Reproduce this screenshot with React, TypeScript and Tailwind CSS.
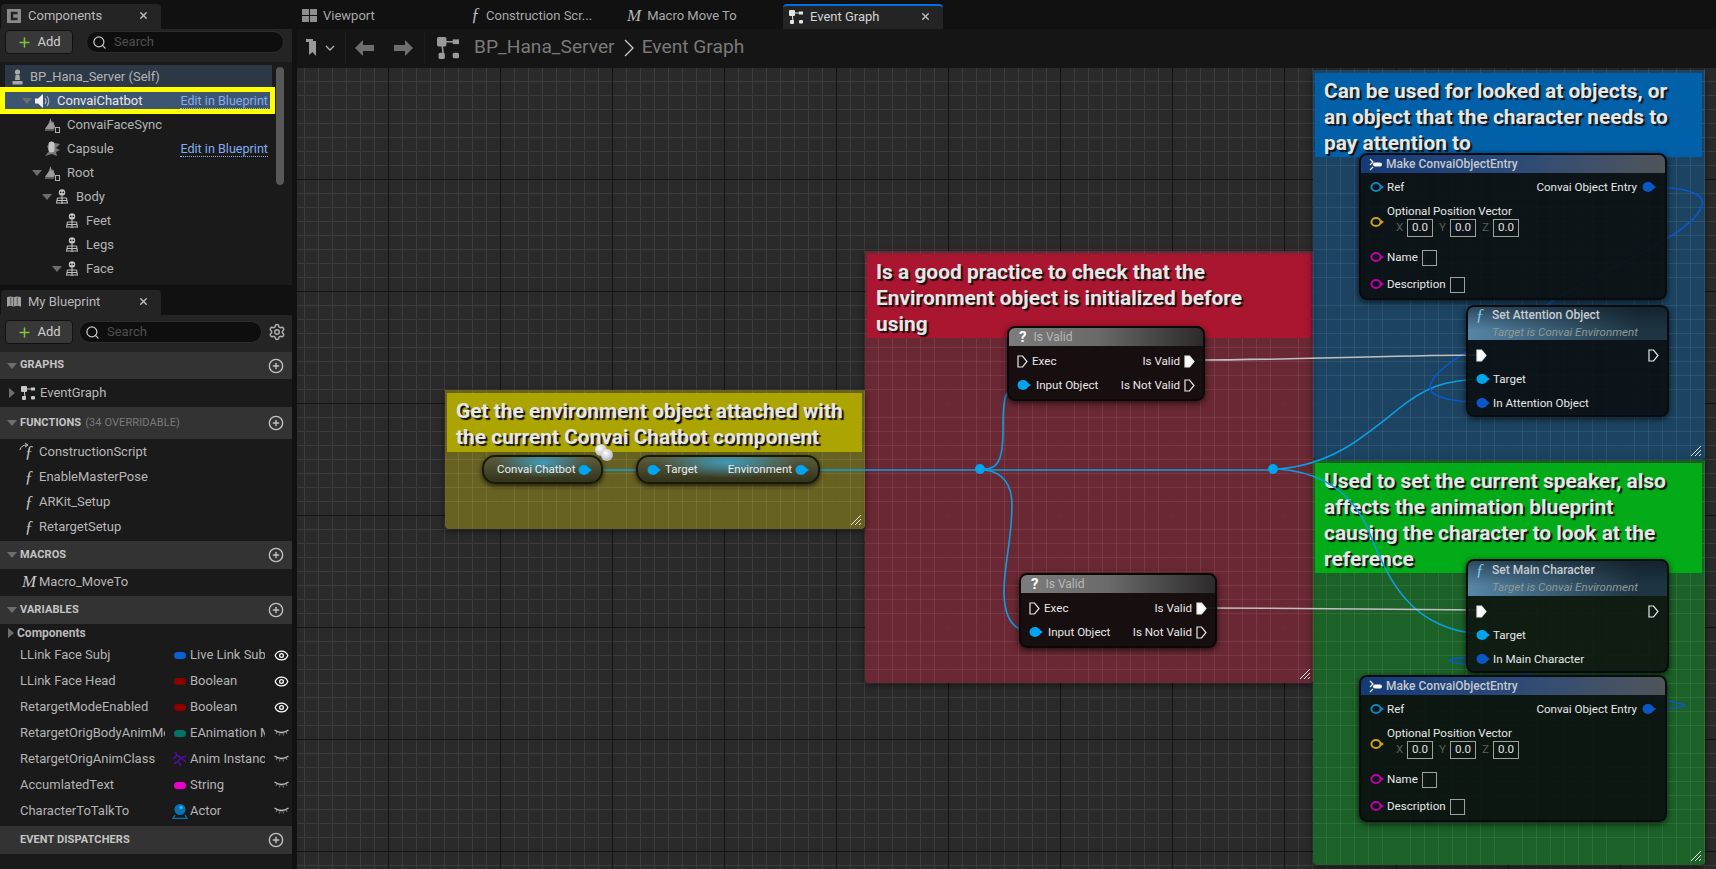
import React from 'react';
import { CirclePlus, Eye, Plus, Search, Settings, X } from 'lucide-react';

const Arrow = ({ open = true }: { open?: boolean }) => (
  <svg width="10" height="10" viewBox="0 0 10 10" className="shrink-0">
    {open ? <path d="M0 2 H10 L5 8 Z" fill="#6e6e6e" /> : <path d="M2 0 V10 L8 5 Z" fill="#6e6e6e" />}
  </svg>
);

const GraphIcon = ({ size = 14, color = '#c8c8c8' }: { size?: number; color?: string }) => (
  <svg width={size} height={size} viewBox="0 0 14 14" className="shrink-0">
    <path d="M3 3 L11 3 M3 3 L4 11" stroke={color} strokeWidth="1" />
    <rect x="0" y="0" width="6" height="6" rx="1" fill={color} />
    <rect x="10" y="1.5" width="4" height="3" fill={color} />
    <rect x="1" y="10" width="4" height="4" rx="1" fill={color} />
    <rect x="10" y="10" width="4" height="3.5" rx="1" fill={color} />
  </svg>
);

const Skeleton = () => (
  <svg width="14" height="16" viewBox="0 0 14 16" className="shrink-0">
    <circle cx="7" cy="3.5" r="3.2" fill="#c4c4c4" />
    <circle cx="5.7" cy="3.4" r="0.8" fill="#1a1a1a" />
    <circle cx="8.3" cy="3.4" r="0.8" fill="#1a1a1a" />
    <path d="M7 7 V15 M2.5 9 H11.5 M2 11.5 H12 M1.5 14 H12.5 M2.5 9 L1.5 14.5 M11.5 9 L12.5 14.5" stroke="#c4c4c4" strokeWidth="1.1" fill="none" />
  </svg>
);

const Mesh = () => (
  <svg width="15" height="16" viewBox="0 0 15 16" className="shrink-0">
    <path d="M0 12 L4 6 L5.5 1 L7 6 L8 4 L10 10 L9 12 Z" fill="#9a9a9a" />
    <path d="M0 13 H9" stroke="#9a9a9a" />
    <rect x="10.5" y="10.5" width="4" height="5" fill="none" stroke="#b0b0b0" />
  </svg>
);

const CapsuleIcon = () => (
  <svg width="15" height="16" viewBox="0 0 15 16" className="shrink-0">
    <path d="M0 15 L4 10 L2 5 L10 2 L15 3 L11 7 L15 9 L11 11 L12 15 L7 13 Z" fill="#777" />
    <rect x="3.5" y="0.5" width="6" height="11" rx="3" fill="#c4c4c4" />
  </svg>
);

const Pawn = () => (
  <svg width="13" height="16" viewBox="0 0 13 16" className="shrink-0">
    <circle cx="6.5" cy="3" r="2.6" fill="#a8a8a8" />
    <path d="M4.5 6 H8.5 L9 11 H4 Z M1.5 12 H11.5 V15.5 H1.5 Z" fill="#a8a8a8" />
  </svg>
);

const Speaker = () => (
  <svg width="16" height="16" viewBox="0 0 16 16" className="shrink-0">
    <path d="M0 5.5 H3 L8 1 V15 L3 10.5 H0 Z" fill="#f0f0f0" />
    <path d="M10 5 Q12 8 10 11 M12 3 Q15.5 8 12 13" stroke="#a8b4c0" strokeWidth="1.2" fill="none" />
  </svg>
);

const ClosedEye = () => (
  <svg width="15" height="10" viewBox="0 0 15 10" className="shrink-0">
    <path d="M0.5 2 Q7.5 7 14.5 2" stroke="#bdbdbd" strokeWidth="1.3" fill="none" />
    <path d="M3 4 L2 6 M6 5.2 L5.6 7.5 M9 5.2 L9.4 7.5 M12 4 L13 6" stroke="#8a8a8a" strokeWidth="1" />
  </svg>
);

const FnGlyph = ({ glyph = 'ƒ', cls = 'text-[#c8c8c8]' }: { glyph?: string; cls?: string }) => (
  <span className={`w-[16px] shrink-0 text-center font-['Liberation_Serif',serif] italic text-[17px] leading-none ${cls}`}>{glyph}</span>
);

const PanelTab = ({ icon, label, w }: { icon: React.ReactNode; label: string; w: string }) => (
  <div className={`ml-[1px] flex h-full items-center rounded-t-[4px] bg-[#242424] pb-[2px] pl-[6px] pr-[12px] ${w}`}>
    <span className="flex w-[14px] shrink-0 items-center">{icon}</span>
    <span className="ml-[7px] flex-1 text-[13px] text-[#b8b8b8]">{label}</span>
    <X size={11} strokeWidth={3} className="text-[#c0c0c0]" />
  </div>
);

const AddButton = () => (
  <div className="flex h-[24px] w-[68px] shrink-0 items-center justify-center gap-[5px] rounded-[4px] border border-[#111] bg-[#383838] text-[13px] text-[#d0d0d0]">
    <Plus size={15} strokeWidth={2.5} className="text-[#84bf3f]" />
    Add
  </div>
);

const SearchBox = ({ w }: { w: string }) => (
  <div className={`flex h-[22px] items-center rounded-full border border-[#2c2c2c] bg-[#0e0e0e] pl-[5px] ${w}`}>
    <Search size={15} className="text-[#c8c8c8]" />
    <span className="ml-[7px] pb-[1px] text-[13px] text-[#4e4e4e]">Search</span>
  </div>
);

const treeRows = [
  { pl: 'pl-[32px]', arrow: false, icon: <Mesh />, label: 'ConvaiFaceSync' },
  { pl: 'pl-[32px]', arrow: false, icon: <CapsuleIcon />, label: 'Capsule', link: true },
  { pl: 'pl-[32px]', arrow: true, icon: <Mesh />, label: 'Root' },
  { pl: 'pl-[42px]', arrow: true, icon: <Skeleton />, label: 'Body' },
  { pl: 'pl-[52px]', arrow: false, icon: <Skeleton />, label: 'Feet' },
  { pl: 'pl-[52px]', arrow: false, icon: <Skeleton />, label: 'Legs' },
  { pl: 'pl-[52px]', arrow: true, icon: <Skeleton />, label: 'Face' },
];

const ComponentsPanel = () => (
  <div className="h-[290px] shrink-0">
    <div className="h-[29px] bg-[#111] pt-[4px]">
      <PanelTab
        w="w-[160px]"
        label="Components"
        icon={
          <svg width="14" height="14" viewBox="0 0 14 14">
            <rect width="14" height="14" fill="#8a8a8a" />
            <path d="M10.5 4 H5 V10 H10.5" stroke="#242424" strokeWidth="2.5" fill="none" />
          </svg>
        }
      />
    </div>
    <div className="flex h-[33px] items-start gap-[13px] bg-[#242424] pl-[5px] pt-[1px]">
      <AddButton />
      <div className="mt-[1px]"><SearchBox w="w-[198px]" /></div>
    </div>
    <div className="relative h-[223px] bg-[#1a1a1a] pt-[3px] text-[13px] text-[#b4b4b4]">
      <div className="ml-[5px] flex h-[24px] w-[267px] items-center gap-[6px] bg-[#2c3846] pl-[6px]">
        <Pawn />
        BP_Hana_Server (Self)
      </div>
      <div className="ml-[5px] flex h-[24px] w-[265px] items-center bg-[#3d5570] pl-[17px] text-[#e8e8e8]">
        <Arrow />
        <span className="ml-[3px]"><Speaker /></span>
        <span className="ml-[6px]">ConvaiChatbot</span>
        <span className="ml-auto mr-[2px] border-b border-dotted border-[#8ab4f0] text-[12.6px] leading-[14px] text-[#82aef0]">Edit in Blueprint</span>
      </div>
      {treeRows.map((row) => (
        <div key={row.label + row.pl} className={`flex h-[24px] items-center ${row.pl}`}>
          <span className="w-[13px] shrink-0">{row.arrow && <Arrow />}</span>
          {row.icon}
          <span className="ml-[7px]">{row.label}</span>
          {row.link && <span className="ml-auto mr-[24px] border-b border-dotted border-[#8ab4f0] text-[12.6px] leading-[14px] text-[#82aef0]">Edit in Blueprint</span>}
        </div>
      ))}
      <div className="absolute left-0 top-[25px] h-[27px] w-[275px] border-[5px] border-[#ffff00]" />
      <div className="absolute left-[276px] top-[5px] h-[118px] w-[8px] rounded-full bg-[#585858]" />
    </div>
  </div>
);

const SectionHeader = ({ h, label, note, arrow = true }: { h: string; label: string; note?: string; arrow?: boolean }) => (
  <div className={`flex items-center bg-[#333] pl-[7px] pr-[8px] text-[11px] font-bold tracking-[0.1px] text-[#c4c4c4] ${h}`}>
    <span className="w-[13px] shrink-0">{arrow && <Arrow />}</span>
    {label}
    {note && <span className="ml-[4px] font-normal text-[#7a7a7a]">{note}</span>}
    <CirclePlus size={16} className="ml-auto text-[#c4c4c4]" />
  </div>
);

const FuncRow = ({ label, glyph, arc }: { label: string; glyph?: string; arc?: boolean }) => (
  <div className="relative flex h-[25px] items-center pl-[21px] text-[13px] text-[#b8b8b8]">
    <FnGlyph glyph={glyph} />
    <span className="ml-[2px]">{label}</span>
    {arc && (
      <svg width="12" height="9" viewBox="0 0 12 9" className="absolute left-[19px] top-[3px]">
        <path d="M1 8 Q2 3 8 3 M6 1 L9 3 L6 5" stroke="#c8c8c8" strokeWidth="1" fill="none" />
      </svg>
    )}
  </div>
);

const pill = (bg: string) => <span className={`h-[7px] w-[12px] rounded-full ${bg}`} />;

const variables = [
  { name: 'LLink Face Subj', type: 'Live Link Sub', icon: pill('bg-[#0b5fd0]'), on: true },
  { name: 'LLink Face Head', type: 'Boolean', icon: pill('bg-[#8c0000]'), on: true },
  { name: 'RetargetModeEnabled', type: 'Boolean', icon: pill('bg-[#8c0000]'), on: true },
  { name: 'RetargetOrigBodyAnimMode', type: 'EAnimation Mode', icon: pill('bg-[#007468]'), on: false },
  {
    name: 'RetargetOrigAnimClass',
    type: 'Anim Instance',
    on: false,
    icon: (
      <svg width="16" height="16" viewBox="0 0 16 16">
        <path d="M1 8 L5 4 L3 1 M5 4 L9 7 L6 10 L9 15 M9 7 L14 5 M6 10 L2 13 M9 7 L14 11" stroke="#4b0f9c" strokeWidth="1.6" fill="none" />
      </svg>
    ),
  },
  { name: 'AccumlatedText', type: 'String', icon: pill('bg-[#ee00cc]'), on: false },
  {
    name: 'CharacterToTalkTo',
    type: 'Actor',
    on: false,
    icon: (
      <svg width="16" height="16" viewBox="0 0 16 16">
        <circle cx="8" cy="6.5" r="5.5" fill="#0a72b4" />
        <circle cx="9" cy="4.5" r="1.8" fill="#35b0e8" />
        <path d="M3 12 L1 15.5 H15 L13 12" stroke="#0a72b4" strokeWidth="1.5" fill="none" />
      </svg>
    ),
  },
];

const BlueprintPanel = () => (
  <div className="flex-1 bg-[#1a1a1a]">
    <div className="h-[25px] bg-[#111]">
      <PanelTab
        w="w-[160px]"
        label="My Blueprint"
        icon={
          <svg width="15" height="14" viewBox="0 0 15 14">
            <path d="M0 2 Q4 0 7 2 Q11 0 15 2 V12 Q11 10 7 12 Q4 10 0 12 Z" fill="#a0a0a0" />
            <path d="M4 2 V10 M7 2 V12 M11 2 V10" stroke="#555" />
          </svg>
        }
      />
    </div>
    <div className="flex h-[37px] items-center gap-[6px] bg-[#242424] pb-[3px] pl-[5px]">
      <AddButton />
      <SearchBox w="w-[183px]" />
      <Settings size={18} className="text-[#b0b0b0]" />
    </div>
    <SectionHeader h="h-[27px]" label="GRAPHS" />
    <div className="flex h-[28px] items-center pl-[7px] text-[13px] text-[#b8b8b8]">
      <span className="w-[14px]"><Arrow open={false} /></span>
      <GraphIcon />
      <span className="ml-[5px]">EventGraph</span>
    </div>
    <SectionHeader h="h-[32px]" label="FUNCTIONS" note="(34 OVERRIDABLE)" />
    <FuncRow label="ConstructionScript" arc />
    <FuncRow label="EnableMasterPose" />
    <FuncRow label="ARKit_Setup" />
    <FuncRow label="RetargetSetup" />
    <div className="h-[2px]" />
    <SectionHeader h="h-[28px]" label="MACROS" />
    <FuncRow label="Macro_MoveTo" glyph="M" />
    <div className="h-[2px]" />
    <SectionHeader h="h-[28px]" label="VARIABLES" />
    <div className="flex h-[18px] items-center pl-[6px] text-[12px] font-bold text-[#b8b8b8]">
      <span className="w-[11px]"><Arrow open={false} /></span>
      Components
    </div>
    {variables.map((v) => (
      <div key={v.name} className="flex h-[26px] items-center text-[13px] text-[#b4b4b4]">
        <span className="ml-[20px] w-[145px] shrink-0 overflow-hidden whitespace-nowrap">{v.name}</span>
        <span className="ml-[5px] flex w-[20px] shrink-0 justify-center">{v.icon}</span>
        <span className="w-[75px] shrink-0 overflow-hidden whitespace-nowrap">{v.type}</span>
        <span className="ml-[9px] flex w-[15px] justify-center">
          {v.on ? <Eye size={15} className="text-white" /> : <ClosedEye />}
        </span>
      </div>
    ))}
    <div className="h-[2px]" />
    <SectionHeader h="h-[28px]" label="EVENT DISPATCHERS" arrow={false} />
  </div>
);

const GraphTab = ({ icon, label, w }: { icon: React.ReactNode; label: string; w: string }) => (
  <div className={`flex h-full items-center gap-[6px] pt-[2px] text-[13px] text-[#a8a8a8] ${w}`}>
    {icon}
    {label}
  </div>
);

const GridCanvas = 'bg-[#2a2a2a] [background-image:linear-gradient(90deg,#141414_1px,transparent_1px),linear-gradient(#141414_1px,transparent_1px),linear-gradient(90deg,#3c3c3c_1px,transparent_1px),linear-gradient(#3c3c3c_1px,transparent_1px)] [background-size:112px_112px,112px_112px,14px_14px,14px_14px] [background-position:91px_111px,91px_111px,7px_13px,7px_13px]';

const Grip = () => (
  <svg width="12" height="12" viewBox="0 0 12 12" className="absolute bottom-[3px] right-[3px]">
    <path d="M1 11 L11 1 M5 11 L11 5 M9 11 L11 9" stroke="#e8e8e8" strokeWidth="1" />
  </svg>
);

const Comment = ({ box, body, head, headH, lines }: { box: string; body: string; head: string; headH: string; lines: string[] }) => (
  <div className={`absolute rounded-b-[4px] pl-[2px] pr-[3px] pt-[3px] shadow-[0_2px_6px_#0008] [background-image:linear-gradient(90deg,#ffffff0c_1px,transparent_1px),linear-gradient(#ffffff0c_1px,transparent_1px)] [background-size:14px_14px] ${box} ${body}`}>
    <div className={`pl-[9px] pt-[5px] text-[20.9px] font-bold leading-[26px] text-[#e6e6e6] [text-shadow:2px_2px_1px_#111] ${head} ${headH}`}>
      {lines.map((l) => <div key={l} className="-translate-y-[0.5px] whitespace-nowrap">{l}</div>)}
    </div>
    <Grip />
  </div>
);

const DataPin = ({ color, hollow }: { color: string; hollow?: boolean }) => (
  <svg width="16" height="12" viewBox="0 0 16 12" className="shrink-0">
    {hollow ? (
      <ellipse cx="6" cy="6" rx="4.6" ry="4" fill="none" stroke={color} strokeWidth="2" />
    ) : (
      <ellipse cx="6" cy="6" rx="5.5" ry="5" fill={color} />
    )}
    <path d="M11 4 L14 6 L11 8 Z" fill={color} />
  </svg>
);

const ExecPin = ({ filled }: { filled?: boolean }) => (
  <svg width="11" height="13" viewBox="0 0 11 13" className="shrink-0">
    <path d="M1 1 H5.5 L10 6.5 L5.5 12 H1 Z" fill={filled ? '#fff' : 'none'} stroke="#e8e8e8" strokeWidth="1.2" />
  </svg>
);

const PureNode = ({ box, children }: { box: string; children: React.ReactNode }) => (
  <div className={`absolute flex h-[29px] items-center rounded-[13px] border-2 border-[#191909] bg-[radial-gradient(ellipse_at_50%_20%,#3f9ab8_0%,transparent_55%),linear-gradient(#5c5c3e,#33331b)] pt-[1px] text-[11.5px] text-[#ececec] shadow-[0_2px_5px_#000a] ${box}`}>
    {children}
  </div>
);

const BLUE = '#00a4ef';
const DEEP = '#0a58c8';

const NumBox = ({ axis }: { axis: string }) => (
  <>
    <span className="w-[9px] text-[#5c5c5c]">{axis}</span>
    <span className="ml-[2px] mr-[6px] flex h-[18px] w-[26px] items-center justify-center border border-[#a0a0a0] text-[#e0e0e0]">0.0</span>
  </>
);

const MakeNode = ({ box }: { box: string }) => (
  <div className={`absolute h-[147px] rounded-[8px] border-2 border-[#090c0e] bg-[#0b0f10e6] text-[11.6px] text-[#e8e8e8] shadow-[0_2px_6px_#000a] ${box}`}>
    <div className="flex h-[18px] items-center rounded-t-[6px] bg-gradient-to-r from-[#143a78] via-[#2b4a78] to-[#50545a] pl-[8px] font-medium text-[#c4c8cc]">
      <svg width="13" height="13" viewBox="0 0 13 13" className="shrink-0">
        <path d="M1 1 L4 4 L1 7 M1 12 L4 9" stroke="#fff" strokeWidth="1.2" fill="none" />
        <rect x="4" y="4.5" width="9" height="4" rx="2" fill="#fff" />
      </svg>
      <span className="ml-[4px] text-[12px]">Make ConvaiObjectEntry</span>
    </div>
    <div className="pt-[1px] [&_span]:translate-y-[1px]">
      <div className="flex h-[26px] items-center pl-[9px] pr-[7px]">
        <DataPin color="#0c86bc" hollow />
        <span className="ml-[1px]">Ref</span>
        <span className="ml-auto mr-[5px]">Convai Object Entry</span>
        <DataPin color={DEEP} />
      </div>
      <div className="flex h-[44px] items-center pl-[9px]">
        <DataPin color="#d0a018" hollow />
        <div className="ml-[1px] self-start pt-[2px]">
          <div className="h-[17px] leading-[18px]">Optional Position Vector</div>
          <div className="-mt-[1px] ml-[9px] flex items-center"><NumBox axis="X" /><NumBox axis="Y" /><NumBox axis="Z" /></div>
        </div>
      </div>
      <div className="flex h-[26px] items-center pl-[9px]">
        <DataPin color="#c000a8" hollow />
        <span className="ml-[1px]">Name</span>
        <span className="ml-[4px] h-[16px] w-[15px] border border-[#a0a0a0]" />
      </div>
      <div className="flex h-[27px] items-center pl-[9px]">
        <DataPin color="#c000a8" hollow />
        <span className="ml-[1px]">Description</span>
        <span className="ml-[4px] h-[16px] w-[15px] border border-[#a0a0a0]" />
      </div>
    </div>
  </div>
);

const SetNode = ({ box, title, input, header, body }: { box: string; title: string; input: string; header: string; body: string }) => (
  <div className={`absolute w-[203px] rounded-[8px] border-2 border-[#090c0e] text-[11.6px] text-[#e8e8e8] shadow-[0_2px_6px_#000a] ${box} ${body}`}>
    <div className={`flex flex-col justify-center rounded-t-[6px] bg-[linear-gradient(#0b151c88,transparent_70%),linear-gradient(90deg,#5686a8,#1e3442_85%)] pl-[4px] ${header}`}>
      <div className="flex items-center text-[12px] font-medium text-[#c8ccd0]">
        <FnGlyph cls="text-[#7ccaf0]" />
        <span className="ml-[4px]">{title}</span>
      </div>
      <div className="ml-[20px] italic text-[#8f9a90]">Target is Convai Environment</div>
    </div>
    <div className="pt-[3px] [&_span]:translate-y-[1px]">
      <div className="flex h-[24px] items-center justify-between px-[8px]">
        <ExecPin filled />
        <ExecPin />
      </div>
      <div className="flex h-[24px] items-center pl-[8px]">
        <DataPin color={BLUE} />
        <span className="ml-[1px]">Target</span>
      </div>
      <div className="flex h-[24px] items-center pl-[8px]">
        <DataPin color={DEEP} />
        <span className="ml-[1px]">{input}</span>
      </div>
    </div>
  </div>
);

const ValidNode = ({ box, filledOut }: { box: string; filledOut?: boolean }) => (
  <div className={`absolute w-[198px] rounded-[8px] border-2 border-[#0c0808] bg-[#100c0ceb] pb-[2px] text-[11.6px] text-[#e8e8e8] shadow-[0_2px_6px_#000a] ${box}`}>
    <div className="flex h-[18px] items-center rounded-t-[6px] bg-[linear-gradient(90deg,#7c7c7c_0%,#6a6a6a_45%,#2c2a2a_100%)] pl-[10px] text-[12px] text-[#b8b8b8]">
      <span className="text-[15px] font-bold text-white">?</span>
      <span className="ml-[7px]">Is Valid</span>
    </div>
    <div className="pt-[3px] [&_span]:translate-y-[1px]">
      <div className="flex h-[24px] items-center px-[8px]">
        <ExecPin />
        <span className="ml-[4px]">Exec</span>
        <span className="ml-auto mr-[4px]">Is Valid</span>
        <ExecPin filled={filledOut} />
      </div>
      <div className="flex h-[24px] items-center px-[8px]">
        <DataPin color={BLUE} />
        <span className="ml-[3px]">Input Object</span>
        <span className="ml-auto mr-[4px]">Is Not Valid</span>
        <ExecPin />
      </div>
    </div>
  </div>
);

const Wires = () => (
  <svg viewBox="297 68 1419 801" className="absolute inset-0 h-full w-full" fill="none">
    <g stroke="#0c9fe0" strokeWidth="1.6">
      <path d="M583 470 H1273" />
      <path d="M985 469 C1000 469 1003 455 1003 430 C1003 400 1003 386 1023 385" />
      <path d="M985 470 C1003 472 1012 485 1012 505 C1012 540 1003 570 1004 595 C1005 620 1015 632 1033 632" />
      <path d="M1278 469 C1330 465 1360 440 1397 410 C1425 387 1445 380 1482 379" />
      <path d="M1278 469 C1320 472 1350 490 1367 527 C1385 570 1405 630 1482 634" />
    </g>
    <g stroke="#0a58c8" strokeWidth="1.6">
      <path d="M1648 187 C1690 187 1705 195 1702 205 C1695 235 1600 270 1550 303 C1500 335 1430 365 1430 388 C1432 398 1455 402 1482 402" />
      <path d="M1648 709 C1680 709 1690 706 1682 704 C1650 697 1560 680 1490 668 C1460 663 1448 663 1450 660 C1455 657 1470 658 1482 658" />
    </g>
    <g stroke="#c0c0c0" strokeWidth="1.6">
      <path d="M1195 360 C1300 360 1400 355 1482 355" />
      <path d="M1205 608 C1300 608 1400 610 1482 610" />
    </g>
    <circle cx="980" cy="469" r="5" fill="#00a4ef" />
    <circle cx="1273" cy="469" r="5" fill="#00a4ef" />
  </svg>
);

export default function App() {
  return (
    <div className="flex h-[869px] w-[1716px] overflow-hidden bg-[#111] font-['Roboto',sans-serif]">
      <div className="flex w-[292px] shrink-0 flex-col">
        <ComponentsPanel />
        <BlueprintPanel />
      </div>
      <div className="ml-[5px] flex min-w-0 flex-1 flex-col">
        <div className="flex h-[29px] shrink-0 items-end">
          <GraphTab
            w="w-[174px] pl-[5px]"
            label="Viewport"
            icon={
              <svg width="15" height="13" viewBox="0 0 15 13">
                <path d="M0 0 H7 V6 H0 Z M8 0 H15 V6 H8 Z M0 7 H7 V13 H0 Z M8 7 H15 V13 H8 Z" fill="#8e8e8e" />
              </svg>
            }
          />
          <GraphTab w="w-[156px]" label="Construction Scr..." icon={<span className="font-['Liberation_Serif',serif] text-[18px] italic text-[#b8b8b8]">ƒ</span>} />
          <GraphTab w="w-[156px]" label="Macro Move To" icon={<span className="font-['Liberation_Serif',serif] text-[17px] italic text-[#b8b8b8]">M</span>} />
          <div className="flex h-[25px] w-[160px] items-center rounded-t-[4px] border-t-2 border-[#0070e0] bg-[#242424] pb-[2px] pl-[6px] pr-[12px] text-[13px] text-[#d4d4d4]">
            <GraphIcon color="#e4e4e4" />
            <span className="ml-[7px] flex-1">Event Graph</span>
            <X size={11} strokeWidth={3} className="text-[#c0c0c0]" />
          </div>
        </div>
        <div className="flex h-[39px] shrink-0 items-center bg-[#151515] pb-[2px] pl-[9px] text-[19.2px] text-[#7a7a7a]">
          <svg width="10" height="17" viewBox="0 0 10 17">
            <path d="M0 0 H7 V2 H10 V17 L6.5 13 L3 16 V3 H0 Z" fill="#9a9a9a" />
          </svg>
          <svg width="10" height="6" viewBox="0 0 10 6" className="ml-[9px]">
            <path d="M1 1 L5 5 L9 1" stroke="#b0b0b0" strokeWidth="1.3" fill="none" />
          </svg>
          <span className="ml-[10px] h-[32px] w-[1px] bg-[#1e1e1e]" />
          <svg width="19" height="16" viewBox="0 0 19 16" className="ml-[9px]">
            <path d="M0 8 L8 0 V5 H19 V11 H8 V16 Z" fill="#6e6e6e" />
          </svg>
          <svg width="19" height="16" viewBox="0 0 19 16" className="ml-[20px]">
            <path d="M19 8 L11 0 V5 H0 V11 H11 V16 Z" fill="#6e6e6e" />
          </svg>
          <span className="ml-[11px] h-[32px] w-[1px] bg-[#1e1e1e]" />
          <span className="ml-[12px]"><GraphIcon size={22} color="#9a9a9a" /></span>
          <span className="ml-[15px]">BP_Hana_Server</span>
          <svg width="10" height="18" viewBox="0 0 10 18" className="ml-[9px]">
            <path d="M1 1 L9 9 L1 17" stroke="#c4c4c4" strokeWidth="1.4" fill="none" />
          </svg>
          <span className="ml-[8px]">Event Graph</span>
        </div>
        <div className={`relative min-h-0 flex-1 overflow-hidden ${GridCanvas}`}>
          <Comment
            box="left-[568px] top-[183px] h-[432px] w-[449px] [background-position:13px_12px]"
            body="bg-[rgba(150,40,60,0.6)]"
            head="bg-[#aa152f]"
            headH="h-[84px]"
            lines={['Is a good practice to check that the', 'Environment object is initialized before', 'using']}
          />
          <Comment
            box="left-[148px] top-[322px] h-[139px] w-[420px] [background-position:13px_13px]"
            body="bg-[rgba(145,135,30,0.6)]"
            head="bg-[#aca400]"
            headH="h-[59px]"
            lines={['Get the environment object attached with', 'the current Convai Chatbot component']}
          />
          <Comment
            box="left-[1016px] top-[2px] h-[390px] w-[392px] [background-position:13px_11px]"
            body="bg-[rgba(20,85,135,0.6)]"
            head="bg-[#0160a8]"
            headH="h-[84px]"
            lines={['Can be used for looked at objects, or', 'an object that the character needs to', 'pay attention to']}
          />
          <Comment
            box="left-[1016px] top-[392px] h-[405px] w-[392px] [background-position:13px_13px]"
            body="bg-[rgba(20,135,40,0.6)]"
            head="bg-[#02ab17]"
            headH="h-[110px]"
            lines={['Used to set the current speaker, also', 'affects the animation blueprint', 'causing the character to look at the', 'reference']}
          />
          <Wires />
          <PureNode box="left-[185px] top-[387px] w-[121px] pl-[13px]">
            Convai Chatbot
            <span className="absolute left-[94px]"><DataPin color={BLUE} /></span>
          </PureNode>
          <PureNode box="left-[339px] top-[387px] w-[184px] pl-[9px]">
            <DataPin color={BLUE} />
            <span className="ml-[2px]">Target</span>
            <span className="ml-auto mr-[3px]">Environment</span>
            <span className="mr-[7px]"><DataPin color={BLUE} /></span>
          </PureNode>
          <ValidNode box="left-[710px] top-[258px]" filledOut />
          <ValidNode box="left-[722px] top-[505px]" filledOut />
          <MakeNode box="left-[1062px] top-[85px] w-[308px]" />
          <SetNode box="left-[1169px] top-[237px]" title="Set Attention Object" input="In Attention Object" header="h-[33px]" body="bg-[#0b0f12e6]" />
          <SetNode box="left-[1169px] top-[491px]" title="Set Main Character" input="In Main Character" header="h-[35px]" body="bg-[#0d1510e6]" />
          <MakeNode box="left-[1062px] top-[607px] w-[308px]" />
          <span className="absolute left-[298px] top-[376px] h-[12px] w-[12px] rounded-full bg-[radial-gradient(circle_at_40%_35%,#fff,#9aa0a8)]" />
          <span className="absolute left-[304px] top-[381px] h-[12px] w-[12px] rounded-full bg-[radial-gradient(circle_at_40%_35%,#fff,#9aa0a8)]" />
        </div>
      </div>
    </div>
  );
}
